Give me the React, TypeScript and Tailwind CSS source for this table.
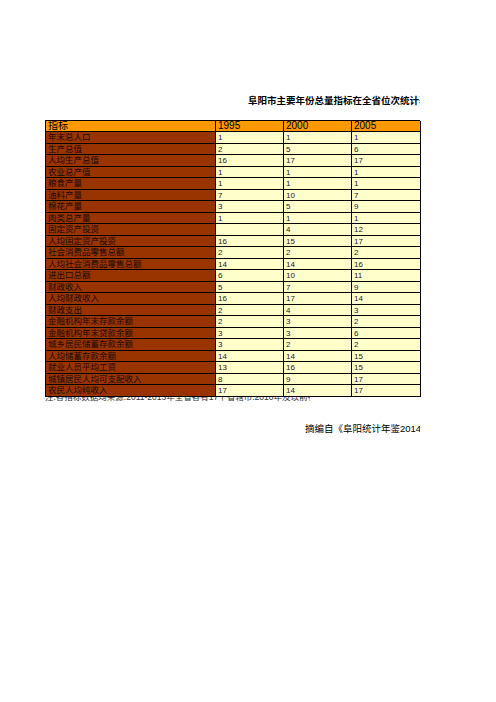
import { Fragment } from "react";

const rows: [string, string, string, string][] = [
  ["年末总人口", "1", "1", "1"],
  ["生产总值", "2", "5", "6"],
  ["人均生产总值", "16", "17", "17"],
  ["农业总产值", "1", "1", "1"],
  ["粮食产量", "1", "1", "1"],
  ["油料产量", "7", "10", "7"],
  ["棉花产量", "3", "5", "9"],
  ["肉类总产量", "1", "1", "1"],
  ["固定资产投资", "", "4", "12"],
  ["人均固定资产投资", "16", "15", "17"],
  ["社会消费品零售总额", "2", "2", "2"],
  ["人均社会消费品零售总额", "14", "14", "16"],
  ["进出口总额", "6", "10", "11"],
  ["财政收入", "5", "7", "9"],
  ["人均财政收入", "16", "17", "14"],
  ["财政支出", "2", "4", "3"],
  ["金融机构年末存款余额", "2", "3", "2"],
  ["金融机构年末贷款余额", "3", "3", "6"],
  ["城乡居民储蓄存款余额", "3", "2", "2"],
  ["人均储蓄存款余额", "14", "14", "15"],
  ["就业人员平均工资", "13", "16", "15"],
  ["城镇居民人均可支配收入", "8", "9", "17"],
  ["农民人均纯收入", "17", "14", "17"],
];

export default function App() {
  return (
    <div
      className="min-h-screen bg-white pl-[45px] pt-[95px] text-black"
      style={{ fontFamily: '"Liberation Sans", "Noto Sans CJK SC", sans-serif' }}
    >
      {/* title, clipped at table edge */}
      <div className="w-[375px] overflow-hidden whitespace-nowrap pl-[203px] text-[9.5px] font-bold leading-[12px]">
        阜阳市主要年份总量指标在全省位次统计表
      </div>

      <div className="mt-[13px] grid w-[375px] grid-cols-[170px_68px_68px_69px] border-l border-t border-black">
        <div className="h-[11px] border-b border-r border-black bg-[#ff9900] pl-[2px] text-[10px] leading-[10px]">指标</div>
        <div className="h-[11px] border-b border-r border-black bg-[#ff9900] pl-[2px] text-[10px] leading-[10px]">1995</div>
        <div className="h-[11px] border-b border-r border-black bg-[#ff9900] pl-[2px] text-[10px] leading-[10px]">2000</div>
        <div className="h-[11px] border-b border-r border-black bg-[#ff9900] pl-[2px] text-[10px] leading-[10px]">2005</div>
        {rows.map((r) => (
          <Fragment key={r[0]}>
            <div className="h-[11.5px] overflow-hidden whitespace-nowrap border-b border-r border-black bg-[#993300] pl-[2px] text-[8.5px] leading-[11px] text-[#1a0a00]">
              {r[0]}
            </div>
            <div className="h-[11.5px] border-b border-r border-black bg-[#ffffcc] pl-[2px] text-[8px] leading-[11px] text-[#222]">{r[1]}</div>
            <div className="h-[11.5px] border-b border-r border-black bg-[#ffffcc] pl-[2px] text-[8px] leading-[11px] text-[#222]">{r[2]}</div>
            <div className="h-[11.5px] border-b border-r border-black bg-[#ffffcc] pl-[2px] text-[8px] leading-[11px] text-[#222]">{r[3]}</div>
          </Fragment>
        ))}
      </div>

      {/* note line, top half hidden under table */}
      <div className="h-[5px] w-[265px] overflow-hidden whitespace-nowrap">
        <div className="-mt-[5px] text-[8.5px] leading-[10px] text-[#333]">
          注:各指标数据均来源:2011-2013年全省各有17个省辖市:2010年及以前有17个.
        </div>
      </div>

      <div className="mt-[21px] w-[375px] overflow-hidden whitespace-nowrap pl-[260px] text-[9.5px] leading-[12px]">
        摘编自《阜阳统计年鉴2014》
      </div>
    </div>
  );
}
